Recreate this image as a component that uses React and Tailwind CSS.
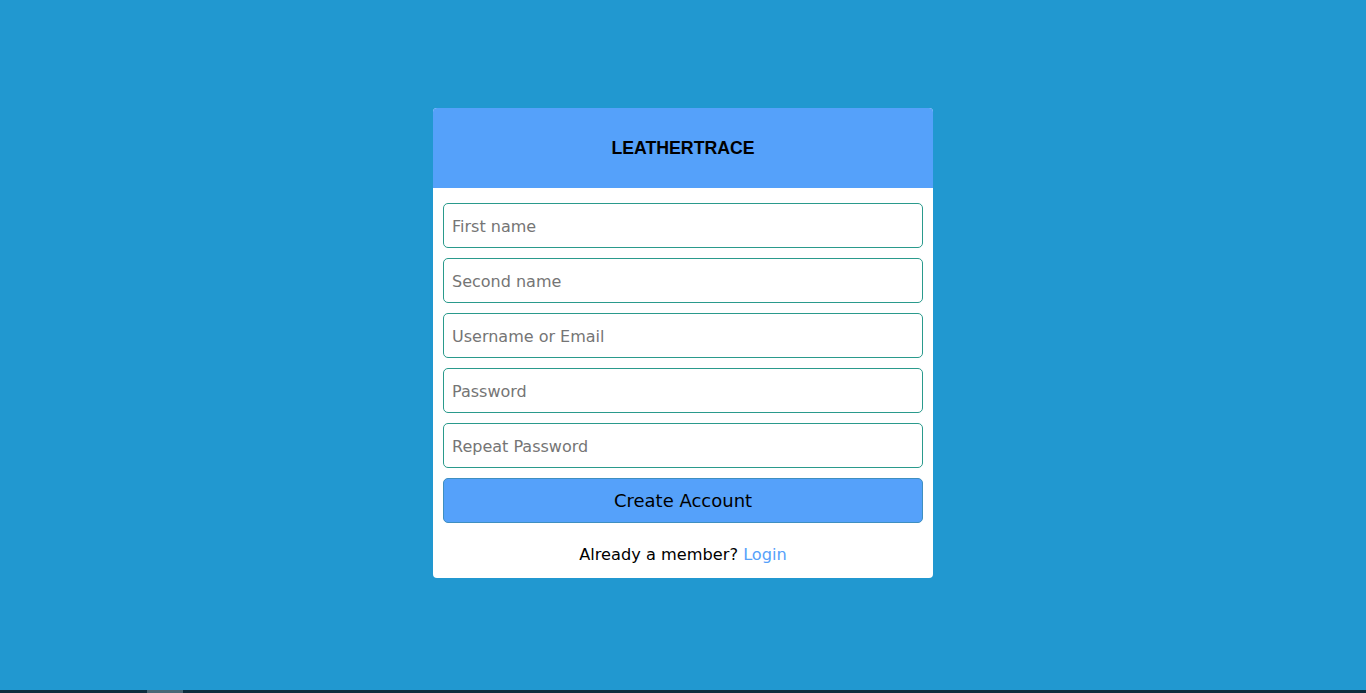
export default function App() {
  const fields = [
    { ph: 'First name', type: 'text' },
    { ph: 'Second name', type: 'text' },
    { ph: 'Username or Email', type: 'text' },
    { ph: 'Password', type: 'password' },
    { ph: 'Repeat Password', type: 'password' },
  ]

  return (
    <div className="h-[693px] flex flex-col bg-[#2198d0] font-['DejaVu_Sans',Verdana,sans-serif]">
      <main className="flex-1 pt-[108px] flex justify-center">
        <div className="w-[500px] h-[470px] bg-white rounded-[4px] overflow-hidden">
          <header className="h-[80px] bg-[#55a1fa] flex items-center justify-center">
            <h1 className="font-['Liberation_Sans',Arial,sans-serif] font-bold text-[17.7px] text-black">LEATHERTRACE</h1>
          </header>
          <form className="px-[10px] pt-[15px] flex flex-col gap-[10px]" onSubmit={e => e.preventDefault()}>
            {fields.map(f => (
              <input
                key={f.ph}
                type={f.type}
                placeholder={f.ph}
                className="h-[45px] w-full px-[8px] pt-[2px] border border-[#2a9a8c] rounded-[5px] text-[16px] text-black placeholder:text-[#757575] outline-none"
              />
            ))}
            <button
              type="submit"
              className="h-[45px] w-full bg-[#55a1fa] border border-[#3f8fc0] rounded-[5px] text-[18px] text-black"
            >
              Create Account
            </button>
            <p className="text-center text-[16.2px] text-black mt-[10px]">
              Already a member? <a href="#" className="text-[#55a1fa]">Login</a>
            </p>
          </form>
        </div>
      </main>
      <footer className="h-[3px] bg-[#0d2d3d] flex">
        <div className="ml-[147px] w-[36px] bg-[#4a6775]" />
      </footer>
    </div>
  )
}
